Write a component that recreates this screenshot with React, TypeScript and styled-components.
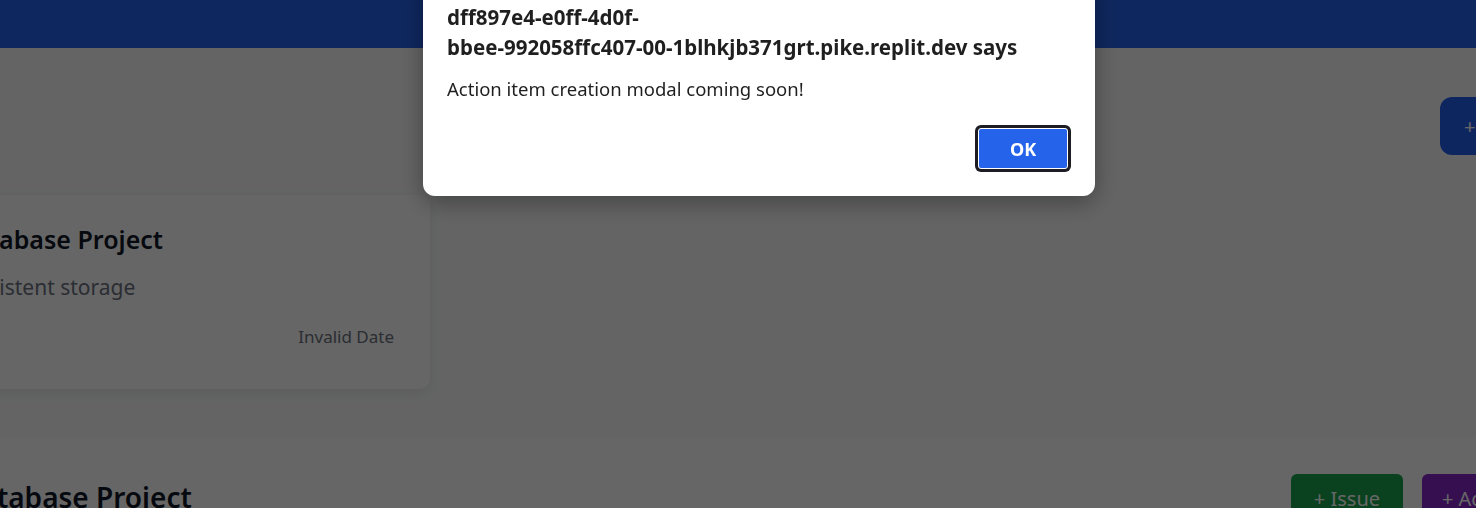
import React from "react";
import styled, { createGlobalStyle } from "styled-components";

const GlobalStyle = createGlobalStyle`
    html, body {
        margin: 0;
        padding: 0;
        height: 100%;
        overflow: hidden;
        background: #ffffff;
        font-family: "Noto Sans", "Open Sans", Arial, sans-serif;
    }
    #root {
        min-height: 100%;
    }
`;

const Page = styled.div`
    width: 1476px;
    height: 508px;
    overflow: hidden;
    background: #f9fafb;
`;

const Header = styled.header`
    height: 48px;
    background: #2563eb;
`;

/* the page is horizontally scrolled in the reference, so the canvas starts left of the window */
const Canvas = styled.main`
    width: 1756px;
    margin-left: -80px;
`;

const Toolbar = styled.div`
    display: flex;
    justify-content: flex-end;
    padding: 49px 0 0;
    height: 58px;
`;

const PrimaryButton = styled.button`
    height: 58px;
    padding: 0 24px;
    margin-right: 14px;
    width: 222px;
    border: none;
    border-radius: 12px;
    background: #2560f0;
    color: #ffffff;
    font-family: inherit;
    font-size: 20px;
    text-align: left;
`;

const Grid = styled.div`
    display: grid;
    grid-template-columns: 510px;
    padding: 40px 0 49px;
`;

const Card = styled.div`
    background: #ffffff;
    border-radius: 10px;
    box-shadow: 0 4px 12px rgba(0, 0, 0, 0.08);
    padding: 28px 36px 40px;
    display: flex;
    flex-direction: column;
`;

const CardTitle = styled.h3`
    margin: 0;
    font-size: 25px;
    line-height: 32px;
    font-weight: 600;
    color: #111827;
`;

const CardText = styled.p`
    margin: 18px 0 0;
    font-size: 21px;
    line-height: 28px;
    color: #6b7280;
`;

const CardDate = styled.span`
    margin-top: 24px;
    align-self: flex-end;
    font-size: 17px;
    line-height: 24px;
    color: #6b7280;
`;

const Section = styled.section`
    background: #ffffff;
    padding: 36px 0 0 40px;
    display: flex;
    justify-content: space-between;
    align-items: flex-start;
    height: 100px;
`;

const SectionTitle = styled.h2`
    margin: 5px 0 0;
    font-size: 28px;
    line-height: 36px;
    font-weight: 600;
    color: #111827;
`;

const Actions = styled.div`
    display: flex;
    gap: 19px;
    margin-right: 89px;
`;

const ActionButton = styled.button<{ tone: string }>`
    height: 48px;
    min-width: 112px;
    padding: 0 20px;
    border: none;
    border-radius: 6px;
    background: ${props => props.tone};
    color: #ffffff;
    font-family: inherit;
    font-size: 20px;
    white-space: nowrap;
`;

const Dim = styled.div`
    position: fixed;
    inset: 0;
    background: rgba(0, 0, 0, 0.6);
`;

const Dialog = styled.div`
    position: fixed;
    top: -22px;
    left: 423px;
    width: 624px;
    padding: 24px 24px 27px;
    background: #ffffff;
    border-radius: 12px;
    box-shadow: 0 6px 24px rgba(0, 0, 0, 0.35);
    font-family: "Noto Sans", "Open Sans", Arial, sans-serif;
    color: #1f1f1f;
`;

const DialogTitle = styled.div`
    font-size: 20.5px;
    line-height: 30px;
    font-weight: 700;
`;

const DialogMessage = styled.div`
    margin-top: 15px;
    font-size: 18.5px;
    line-height: 24px;
`;

const DialogFooter = styled.div`
    display: flex;
    justify-content: flex-end;
    margin-top: 27px;
`;

const OkButton = styled.button`
    width: 90px;
    height: 41px;
    margin-right: 3px;
    border: 1px solid #ffffff;
    border-radius: 3px;
    background: #2563eb;
    box-shadow: 0 0 0 3px #1c1c22;
    color: #ffffff;
    font-family: inherit;
    font-size: 18px;
    font-weight: 700;
`;

export default function App() {
    return (
        <>
            <GlobalStyle />
            <Page>
                <Header />
                <Canvas>
                    <Toolbar>
                        <PrimaryButton>+ New Project</PrimaryButton>
                    </Toolbar>
                    <Grid>
                        <Card>
                            <CardTitle>Database Project</CardTitle>
                            <CardText>Persistent storage</CardText>
                            <CardDate>Invalid Date</CardDate>
                        </Card>
                    </Grid>
                    <Section>
                        <SectionTitle>Database Project</SectionTitle>
                        <Actions>
                            <ActionButton tone="#1aa34c">+ Issue</ActionButton>
                            <ActionButton tone="#8427c8">+ Action Item</ActionButton>
                        </Actions>
                    </Section>
                </Canvas>
            </Page>
            <Dim />
            <Dialog role="alertdialog">
                <DialogTitle>
                    dff897e4-e0ff-4d0f-
                    <br />
                    bbee-992058ffc407-00-1blhkjb371grt.pike.replit.dev says
                </DialogTitle>
                <DialogMessage>Action item creation modal coming soon!</DialogMessage>
                <DialogFooter>
                    <OkButton>OK</OkButton>
                </DialogFooter>
            </Dialog>
        </>
    );
}
